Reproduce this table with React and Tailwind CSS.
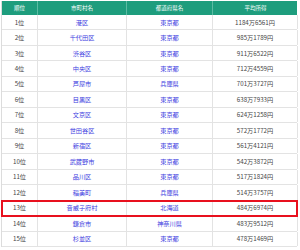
const rows = [
  ['1位', '港区', '東京都', '1184万6561円'],
  ['2位', '千代田区', '東京都', '985万1789円'],
  ['3位', '渋谷区', '東京都', '911万6522円'],
  ['4位', '中央区', '東京都', '712万4559円'],
  ['5位', '芦屋市', '兵庫県', '701万3727円'],
  ['6位', '目黒区', '東京都', '638万7933円'],
  ['7位', '文京区', '東京都', '624万1258円'],
  ['8位', '世田谷区', '東京都', '572万1772円'],
  ['9位', '新宿区', '東京都', '561万4121円'],
  ['10位', '武蔵野市', '東京都', '542万3872円'],
  ['11位', '品川区', '東京都', '517万1824円'],
  ['12位', '稲美町', '兵庫県', '514万3757円'],
  ['13位', '音威子府村', '北海道', '484万6974円'],
  ['14位', '鎌倉市', '神奈川県', '483万9512円'],
  ['15位', '杉並区', '東京都', '478万1469円'],
]

const cols = 'grid grid-cols-[36px_89px_86px_85px]'

export default function App() {
  return (
    <div className="w-[300px] h-[250px] bg-white overflow-hidden pt-px pl-px font-['Noto_Sans_CJK_JP','Noto_Sans',sans-serif]">
      <div className="w-[296px] border-l border-[#dcdcdc]">
        <div className={`${cols} h-[14px] bg-[#1e9d7d] text-white text-[5.5px]`}>
          {['順位', '市町村名', '都道府県名', '平均所得'].map((h, i) => (
            <div key={h} className={`flex items-center justify-center ${i < 3 ? 'border-r border-[#5cbba3]' : ''}`}>
              {h}
            </div>
          ))}
        </div>
        {rows.map(([rank, city, pref, income]) => (
          <div
            key={rank}
            className={`${cols} h-[15.47px] text-[6.2px] border-b border-[#e3e3e3] ${rank === '13位' ? 'outline-2 outline-[#e8101e] -outline-offset-1 relative' : ''}`}
          >
            <div className="flex items-center justify-center border-r border-[#e3e3e3] text-[#444]">{rank}</div>
            <div className="flex items-center justify-center border-r border-[#e3e3e3] text-[#3c3ce0]">{city}</div>
            <div className="flex items-center justify-center border-r border-[#e3e3e3] text-[#3c3ce0]">{pref}</div>
            <div className="flex items-center justify-center border-r border-[#e3e3e3] text-[#444]">{income}</div>
          </div>
        ))}
      </div>
    </div>
  )
}
